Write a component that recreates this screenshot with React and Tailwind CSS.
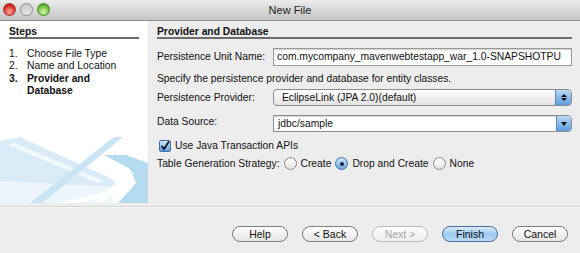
const STEPS = [
  { n: "1.", label: "Choose File Type" },
  { n: "2.", label: "Name and Location" },
  { n: "3.", label: "Provider and Database", current: true },
];

const BUTTONS = [
  { label: "Help" },
  { label: "< Back" },
  { label: "Next >", disabled: true },
  { label: "Finish", primary: true },
  { label: "Cancel" },
];

const Light = ({ className }) => (
  <span className={`h-[13px] w-[13px] rounded-full border ${className}`} />
);

const Radio = ({ checked, label }) => (
  <label className="flex items-center gap-[4px]">
    {checked ? (
      <span className="flex h-[13px] w-[13px] items-center justify-center rounded-full border border-[#3f6ea5] bg-gradient-to-b from-[#cfe5fa] to-[#6aa7e0]">
        <span className="h-[4px] w-[4px] rounded-full bg-[#1b2a3a]" />
      </span>
    ) : (
      <span className="h-[13px] w-[13px] rounded-full border border-[#8a8a8a] bg-gradient-to-b from-white to-[#e4e4e4]" />
    )}
    <span>{label}</span>
  </label>
);

// light blue swoosh at the bottom of the steps pane
const Swoosh = () => (
  <svg width="148" height="80" viewBox="0 0 148 80" className="absolute bottom-0 left-0">
    <polygon points="0,18 20,14 112,56 118,64 70,62 0,58" fill="#d8ebf7" />
    <polygon points="8,22 14,20 104,58 98,60" fill="#f2f9fd" />
    <polygon points="0,58 70,62 118,64 110,80 0,80" fill="#ecf6fc" />
    <polygon points="114,14 123,14 42,80 30,80" fill="#c8e4f5" />
    <polygon points="104,32 126,32 148,40 148,80 118,80 136,60 130,46" fill="#b5dbf0" />
    <polygon points="128,48 134,50 104,78 96,79" fill="#ffffff" />
    <polygon points="60,80 126,64 130,68 78,80" fill="#ffffff" />
  </svg>
);

export default function App() {
  return (
    <div
      className="flex h-[253px] w-[580px] flex-col overflow-hidden bg-[#ededed] text-[10.3px] leading-[12px] text-[#111]"
      style={{ fontFamily: '"Liberation Sans", Arial, sans-serif' }}
    >
      <div className="relative flex h-[21px] shrink-0 items-center justify-center border-b border-[#8f8f8f] bg-gradient-to-b from-[#ececec] to-[#c4c4c4]">
        <div className="absolute left-[3px] top-[3px] flex gap-[4px]">
          <Light className="border-[#a33] bg-[radial-gradient(circle_at_50%_70%,#ffb0a0,#d8302a_60%,#9a1d18)]" />
          <Light className="border-[#8d8d8d] bg-gradient-to-b from-[#c8c8c8] to-[#e6e6e6]" />
          <Light className="border-[#4a8a2a] bg-[radial-gradient(circle_at_50%_70%,#d8f7b0,#6ac038_60%,#3b8020)]" />
        </div>
        <span className="text-[11px] text-[#222]">New File</span>
      </div>

      <div className="flex h-[182px] shrink-0">
        <div className="relative w-[148px] shrink-0 bg-white px-[9px] pt-[5px]">
          <Swoosh />
          <div className="relative border-b-2 border-[#6d6d6d] font-bold leading-[11px]">Steps</div>
          <ol className="relative mt-[9px] leading-[12.3px]">
            {STEPS.map((s) => (
              <li key={s.n} className={`flex ${s.current ? "font-bold" : ""}`}>
                <span className="w-[18px] shrink-0">{s.n}</span>
                <span className="max-w-[96px]">{s.label}</span>
              </li>
            ))}
          </ol>
        </div>

        <div className="flex-1 pl-[9px] pr-[8px] pt-[5px]">
          <div className="border-b-2 border-[#6d6d6d] font-bold leading-[11px]">Provider and Database</div>

          <div className="mt-[9px] flex items-center">
            <span className="w-[116px] shrink-0">Persistence Unit Name:</span>
            <div className="flex h-[18px] flex-1 items-center border border-[#9a9a9a] bg-white pl-[3px] shadow-[inset_0_1px_1px_#cfcfcf]">
              com.mycompany_mavenwebtestapp_war_1.0-SNAPSHOTPU
            </div>
          </div>

          <div className="mt-[7px]">Specify the persistence provider and database for entity classes.</div>

          <div className="mt-[4px] flex items-center">
            <span className="w-[116px] shrink-0">Persistence Provider:</span>
            <div className="flex h-[17px] flex-1 items-center overflow-hidden rounded-[4px] border border-[#8e8e8e] bg-gradient-to-b from-white to-[#e3e3e3]">
              <span className="flex-1 pl-[8px]">EclipseLink (JPA 2.0)(default)</span>
              <span className="flex h-full w-[16px] flex-col items-center justify-center gap-[1px] border-l border-[#5f88b8] bg-gradient-to-b from-[#bcd9f5] to-[#5b9ce0]">
                <span className="h-0 w-0 border-x-[3px] border-b-[3px] border-x-transparent border-b-[#111]" />
                <span className="h-0 w-0 border-x-[3px] border-t-[3px] border-x-transparent border-t-[#111]" />
              </span>
            </div>
          </div>

          <div className="mt-[9px] flex items-start">
            <span className="w-[116px] shrink-0 pt-[1px]">Data Source:</span>
            <div className="flex h-[17px] flex-1 items-center overflow-hidden rounded-r-[4px] border border-[#8e8e8e] bg-white shadow-[inset_0_1px_1px_#d5d5d5]">
              <span className="flex-1 pl-[4px]">jdbc/sample</span>
              <span className="flex h-full w-[15px] items-center justify-center border-l border-[#5f88b8] bg-gradient-to-b from-[#bcd9f5] to-[#5b9ce0]">
                <span className="h-0 w-0 border-x-[3px] border-t-[4px] border-x-transparent border-t-[#111]" />
              </span>
            </div>
          </div>

          <label className="mt-[8px] flex items-center gap-[4px] pl-[2px]">
            <span className="flex h-[12px] w-[12px] items-center justify-center rounded-[2px] border border-[#3f6ea5] bg-gradient-to-b from-[#cfe5fa] to-[#5e9fdc]">
              <svg width="10" height="10" viewBox="0 0 10 10">
                <path d="M1.5 5 L4 8 L9 0.5" fill="none" stroke="#111" strokeWidth="1.8" />
              </svg>
            </span>
            <span>Use Java Transaction APIs</span>
          </label>

          <div className="mt-[5px] flex items-center gap-[4px]">
            <span>Table Generation Strategy:</span>
            <Radio label="Create" />
            <Radio label="Drop and Create" checked />
            <Radio label="None" />
          </div>
        </div>
      </div>

      <div className="mt-[3px] h-[2px] shrink-0 border-t border-[#d6d6d6] bg-[#f7f7f7]" />

      <div className="flex flex-1 items-start justify-end gap-[14px] pr-[12px] pt-[18px]">
        {BUTTONS.map((b) => (
          <button
            key={b.label}
            className={`flex h-[16px] w-[56px] items-center justify-center rounded-full border text-[10.5px] ${
              b.primary
                ? "border-[#4c6f9e] bg-gradient-to-b from-[#dcecfb] via-[#9ccbf2] to-[#b9dcf8] text-[#111]"
                : b.disabled
                ? "border-[#bdbdbd] bg-gradient-to-b from-white to-[#eeeeee] text-[#a5a5a5]"
                : "border-[#7e7e7e] bg-gradient-to-b from-white to-[#e6e6e6] text-[#111]"
            }`}
          >
            {b.label}
          </button>
        ))}
      </div>
    </div>
  );
}
